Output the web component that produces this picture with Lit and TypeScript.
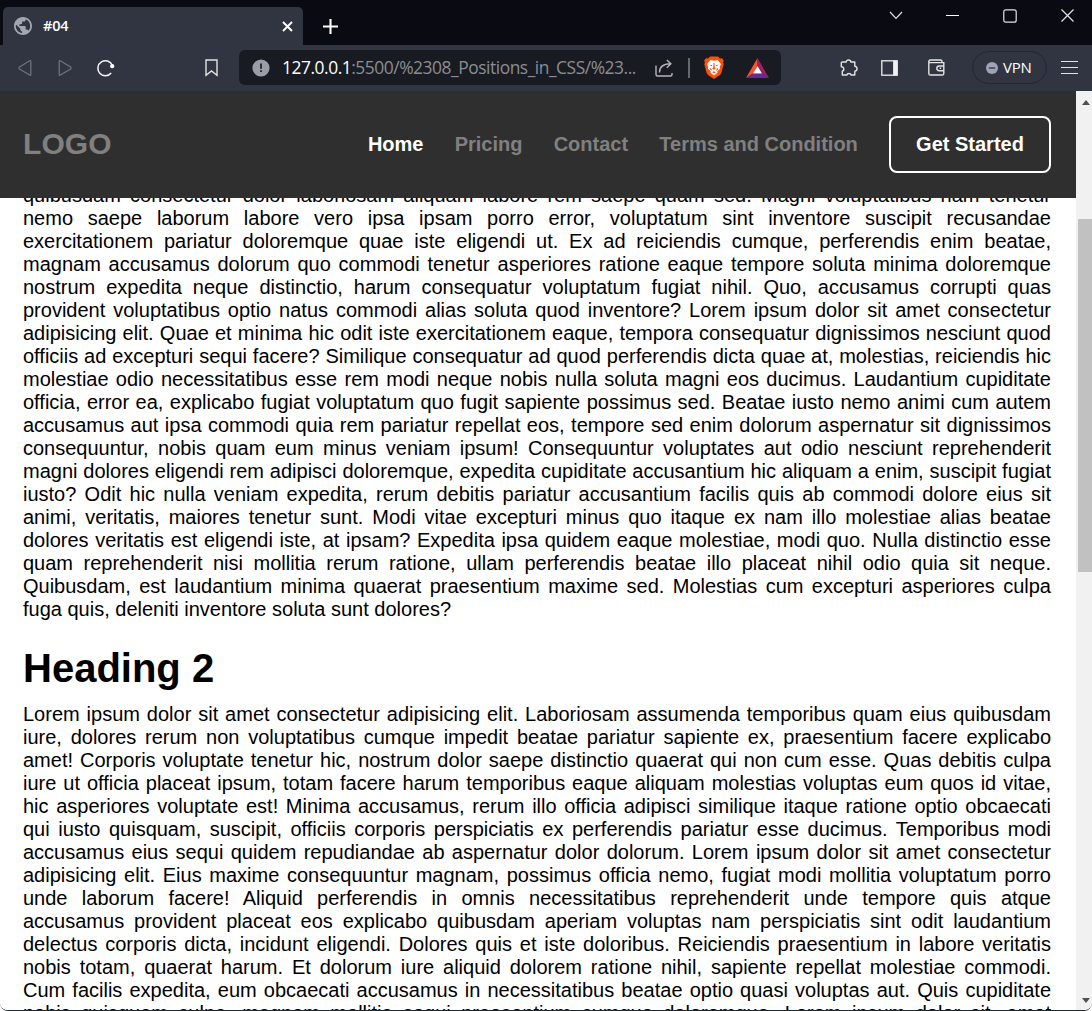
import { LitElement, html, css, svg } from "lit";
import { customElement } from "lit/decorators.js";

const FIRST = [
  "quibusdam consectetur dolor laboriosam aliquam labore rem saepe quam sed. Magni voluptatibus nam tenetur",
  "nemo saepe laborum labore vero ipsa ipsam porro error, voluptatum sint inventore suscipit recusandae",
  "exercitationem pariatur doloremque quae iste eligendi ut. Ex ad reiciendis cumque, perferendis enim beatae,",
  "magnam accusamus dolorum quo commodi tenetur asperiores ratione eaque tempore soluta minima doloremque",
  "nostrum expedita neque distinctio, harum consequatur voluptatum fugiat nihil. Quo, accusamus corrupti quas",
  "provident voluptatibus optio natus commodi alias soluta quod inventore? Lorem ipsum dolor sit amet consectetur",
  "adipisicing elit. Quae et minima hic odit iste exercitationem eaque, tempora consequatur dignissimos nesciunt quod",
  "officiis ad excepturi sequi facere? Similique consequatur ad quod perferendis dicta quae at, molestias, reiciendis hic",
  "molestiae odio necessitatibus esse rem modi neque nobis nulla soluta magni eos ducimus. Laudantium cupiditate",
  "officia, error ea, explicabo fugiat voluptatum quo fugit sapiente possimus sed. Beatae iusto nemo animi cum autem",
  "accusamus aut ipsa commodi quia rem pariatur repellat eos, tempore sed enim dolorum aspernatur sit dignissimos",
  "consequuntur, nobis quam eum minus veniam ipsum! Consequuntur voluptates aut odio nesciunt reprehenderit",
  "magni dolores eligendi rem adipisci doloremque, expedita cupiditate accusantium hic aliquam a enim, suscipit fugiat",
  "iusto? Odit hic nulla veniam expedita, rerum debitis pariatur accusantium facilis quis ab commodi dolore eius sit",
  "animi, veritatis, maiores tenetur sunt. Modi vitae excepturi minus quo itaque ex nam illo molestiae alias beatae",
  "dolores veritatis est eligendi iste, at ipsam? Expedita ipsa quidem eaque molestiae, modi quo. Nulla distinctio esse",
  "quam reprehenderit nisi mollitia rerum ratione, ullam perferendis beatae illo placeat nihil odio quia sit neque.",
  "Quibusdam, est laudantium minima quaerat praesentium maxime sed. Molestias cum excepturi asperiores culpa",
];
const FIRST_END = "fuga quis, deleniti inventore soluta sunt dolores?";

const SECOND = [
  "Lorem ipsum dolor sit amet consectetur adipisicing elit. Laboriosam assumenda temporibus quam eius quibusdam",
  "iure, dolores rerum non voluptatibus cumque impedit beatae pariatur sapiente ex, praesentium facere explicabo",
  "amet! Corporis voluptate tenetur hic, nostrum dolor saepe distinctio quaerat qui non cum esse. Quas debitis culpa",
  "iure ut officia placeat ipsum, totam facere harum temporibus eaque aliquam molestias voluptas eum quos id vitae,",
  "hic asperiores voluptate est! Minima accusamus, rerum illo officia adipisci similique itaque ratione optio obcaecati",
  "qui iusto quisquam, suscipit, officiis corporis perspiciatis ex perferendis pariatur esse ducimus. Temporibus modi",
  "accusamus eius sequi quidem repudiandae ab aspernatur dolor dolorum. Lorem ipsum dolor sit amet consectetur",
  "adipisicing elit. Eius maxime consequuntur magnam, possimus officia nemo, fugiat modi mollitia voluptatum porro",
  "unde laborum facere! Aliquid perferendis in omnis necessitatibus reprehenderit unde tempore quis atque",
  "accusamus provident placeat eos explicabo quibusdam aperiam voluptas nam perspiciatis sint odit laudantium",
  "delectus corporis dicta, incidunt eligendi. Dolores quis et iste doloribus. Reiciendis praesentium in labore veritatis",
  "nobis totam, quaerat harum. Et dolorum iure aliquid dolorem ratione nihil, sapiente repellat molestiae commodi.",
  "Cum facilis expedita, eum obcaecati accusamus in necessitatibus beatae optio quasi voluptas aut. Quis cupiditate",
  "nobis quisquam culpa, magnam mollitia sequi praesentium cumque doloremque. Lorem ipsum dolor sit, amet",
];

const line = (t: string) => html`<span class="line">${t}</span>`;

const icon = (w: number, h: number, body: unknown) =>
  html`<svg class="icon" width=${w} height=${h} viewBox="0 0 ${w} ${h}" fill="none" stroke="#e3e3e3" stroke-width="1.4">${body}</svg>`;

const globe = icon(18, 18, svg`
  <path transform="translate(-1.8 -1.8) scale(.9)" d="M12 2C6.48 2 2 6.48 2 12s4.48 10 10 10 10-4.48 10-10S17.52 2 12 2zm-1 17.93c-3.95-.49-7-3.85-7-7.93 0-.62.08-1.21.21-1.79L9 15v1c0 1.1.9 2 2 2v1.93zm6.9-2.54c-.26-.81-1-1.39-1.9-1.39h-1v-3c0-.55-.45-1-1-1H8v-2h2c.55 0 1-.45 1-1V7h2c1.1 0 2-.9 2-2v-.41c2.93 1.19 5 4.06 5 7.41 0 2.08-.8 3.97-2.1 5.39z" fill="#a3a7b0" stroke="none"/>`);
const closeTab = icon(11, 11, svg`<path d="M1 1L10 10M10 1L1 10" stroke="#fff" stroke-width="1.9"/>`);
const plus = icon(15, 15, svg`<path d="M7.5 0V15M0 7.5H15" stroke="#fff" stroke-width="2.1"/>`);
const back = icon(14, 18, svg`<path d="M11.7 1.8Q12.8 1.2 12.8 2.6V15.4Q12.8 16.8 11.6 16L1.5 10Q.3 9 1.5 8Z" stroke="#70737e" stroke-width="1.3"/>`);
const forward = icon(14, 18, svg`<path d="M2.3 1.8Q1.2 1.2 1.2 2.6V15.4Q1.2 16.8 2.4 16L12.5 10Q13.7 9 12.5 8Z" stroke="#70737e" stroke-width="1.3"/>`);
const reload = icon(18, 18, svg`<path d="M14.2 14A7.5 7.5 0 1 1 15.3 6.3" stroke="#f4f4f4" stroke-width="1.5"/><circle cx="15.2" cy="7.2" r="2.1" fill="#fff" stroke="none"/>`);
const bookmark = icon(13, 18, svg`<path d="M1 1H12V16.4L6.5 12L1 16.4Z"/>`);
const info = icon(18, 18, svg`<circle cx="9" cy="9" r="8.6" fill="#9b9da6" stroke="none"/><path d="M9 4.4V9.7M9 11.3V13" stroke="#181b22" stroke-width="1.7"/>`);
const share = icon(18, 18, svg`<path d="M1 6.5V15.5Q1 17 2.5 17H15.5Q17 17 17 15.5V14M4.5 13.5C4.4 7.5 8 5 15.5 4.8M11.8 1L15.9 4.8L11.8 8.7" stroke="#b4b5b9"/>`);
const brave = icon(20, 23, svg`
  <path d="M6 .5H14L16 2.6L18 2.3L19.8 4.6L19.1 6.5L19.7 8.2L17.5 16.4Q17 18.3 15.3 19.5L10 23L4.7 19.5Q3 18.3 2.5 16.4L.3 8.2L.9 6.5L.2 4.6L2 2.3L4 2.6Z" fill="#fb4f0b" stroke="none"/>
  <path d="M6.5 4L10 4.7L13.5 4L17 8L15.7 11.1L16.2 12.7L13.2 15.3L13.5 16.8L10 19.6L6.5 16.8L6.8 15.3L3.8 12.7L4.3 11.1L3 8Z" fill="#fff" stroke="none"/>
  <path d="M5.2 8.4L8.3 9.2L7.6 10.3ZM14.8 8.4L11.7 9.2L12.4 10.3ZM9.5 7H10.5L10.7 11.5L11.7 12.8L10 13.7L8.3 12.8L9.3 11.5ZM5.4 12.6L6.9 12.3L8 14.3L7 14.6ZM14.6 12.6L13.1 12.3L12 14.3L13 14.6ZM8.2 16.2L10 15.3L11.8 16.2L10 17.3Z" fill="#fb4f0b" stroke="none"/>`);
const rewards = icon(23, 20, svg`
  <path d="M11.5 0L0 20L7 15.4L11.5 8Z" fill="#ff5227" stroke="none"/>
  <path d="M11.5 0L23 20L16 15.4L11.5 8Z" fill="#9e1f63" stroke="none"/>
  <path d="M0 20L7 15.4H16L23 20Z" fill="#662d91" stroke="none"/>
  <path d="M11.5 8L16 15.4H7Z" fill="#fff" stroke="none"/>`);
const chevron = icon(14, 9, svg`<path d="M1 1L7 7.3L13 1" stroke-width="1.2"/>`);
const minimise = icon(13, 13, svg`<path d="M0 6.5H13" stroke="#fff" stroke-width="1"/>`);
const maximise = icon(14, 14, svg`<rect x=".8" y=".8" width="12.4" height="12.4" rx="2" stroke-width="1.2"/>`);
const closeWindow = icon(13, 13, svg`<path d="M.5 .5L12.5 12.5M12.5 .5L.5 12.5" stroke-width="1.2"/>`);
const puzzle = icon(18, 18, svg`<path d="M2.3 3H6.2C6.2 .3 10.8 .3 10.8 3H14.8V7.2C17.8 7.6 17.8 12 14.8 12.2V16H11.2C10.7 13.9 7.2 13.9 6.8 16H2.3V12.1C4.4 11.7 4.4 7.7 1.3 7.7V4Q1.3 3 2.3 3Z" stroke-linejoin="round"/>`);
const sidebar = icon(17, 16, svg`<rect x=".8" y=".8" width="15.4" height="14.4"/><path d="M12.5 1H16V15H12.5Z" fill="#f1f1f1" stroke="#f1f1f1" stroke-width=".8"/>`);
const wallet = icon(17, 17, svg`<path d="M15.8 5.2V3.6H2.2Q.8 3.6 .8 2.5Q.8 1 2.3 1H12.5Q14 1 14 2.4V3.4M.8 2.5V14.4Q.8 16 2.4 16H14.2Q15.8 16 15.8 14.4V4.4M15.8 7H11.2Q8.8 7 8.8 9.3Q8.8 11.7 11.2 11.7H15.8M11.6 9.3H13.2"/>`);
const vpnDot = icon(12, 12, svg`<circle cx="6" cy="6" r="6" fill="#a0a2b8" stroke="none"/><path d="M2.8 6H9.2" stroke="#313441" stroke-width="1.3"/>`);
const menu = icon(17, 15, svg`<path d="M0 1.5H17M0 7.5H17M0 13.5H17" stroke-width="1.1"/>`);

@customElement("browser-chrome")
export class BrowserChrome extends LitElement {
  static styles = css`
    :host { display: block; height: 91px; background: #313441; font-family: "Open Sans", "Noto Sans", sans-serif; color: #fff; }
    .icon { display: block; flex: none; }
    .strip { height: 45px; box-sizing: border-box; background: #0a0a13; display: flex; }
    .tab { width: 300px; margin: 7px 0 0 3px; box-sizing: border-box; background: #313441; border-radius: 5px 5px 0 0; padding: 0 10px 0 11px; display: flex; align-items: center; }
    .title { flex: 1; margin: -1px 0 0 11px; font-size: 14.5px; font-weight: 600; letter-spacing: -0.2px; line-height: 20px; }
    .new { margin: 19px 0 0 20px; }
    .window { margin-left: auto; display: flex; align-items: center; height: 31px; padding-right: 18px; }
    .w-min { margin-left: 43px; }
    .w-max { margin-left: 44px; }
    .w-close { margin-left: 44px; }
    .bar { height: 46px; display: flex; align-items: center; box-sizing: border-box; padding: 0 14px 1px 18px; }
    .b-forward { margin-left: 26px; }
    .b-reload { margin-left: 25px; }
    .b-mark { margin-left: 90px; }
    .address { width: 542px; height: 35px; box-sizing: border-box; margin-left: 21px; border-radius: 6px; background: #181b22; display: flex; align-items: center; padding: 0 12px 0 13px; }
    .url { width: 360px; margin: -1px 0 0 12px; font-size: 17.4px; line-height: 24px; white-space: nowrap; color: #8b8d92; letter-spacing: -0.46px; }
    .host { color: #fff; }
    .a-share { margin-left: 15px; }
    .rule { width: 2px; height: 20px; margin: 0 14px 0 15px; background: #65676d; }
    .a-rewards { margin-left: 22px; }
    .t-puzzle { margin-left: 59px; }
    .t-side { margin-left: 23px; }
    .t-wallet { margin-left: 30px; }
    .vpn { box-sizing: border-box; width: 75px; height: 33px; margin: 0 14px 0 27px; border: 1px solid #242632; border-radius: 17px; display: flex; align-items: center; padding-left: 13px; font-size: 15px; gap: 5px; letter-spacing: -0.2px; }
    .vpn-text { margin-top: -2px; }
  `;
  render() {
    return html`
      <div class="strip">
        <div class="tab">${globe}<span class="title">#04</span>${closeTab}</div>
        <div class="new">${plus}</div>
        <div class="window">
          ${chevron}<span class="w-min">${minimise}</span><span class="w-max">${maximise}</span><span class="w-close">${closeWindow}</span>
        </div>
      </div>
      <div class="bar">
        ${back}<span class="b-forward">${forward}</span><span class="b-reload">${reload}</span><span class="b-mark">${bookmark}</span>
        <div class="address">
          ${info}
          <span class="url"><span class="host">127.0.0.1</span>:5500/%2308_Positions_in_CSS/%23...</span>
          <span class="a-share">${share}</span><span class="rule"></span>${brave}<span class="a-rewards">${rewards}</span>
        </div>
        <span class="t-puzzle">${puzzle}</span><span class="t-side">${sidebar}</span><span class="t-wallet">${wallet}</span>
        <div class="vpn">${vpnDot}<span class="vpn-text">VPN</span></div>
        ${menu}
      </div>`;
  }
}

@customElement("site-header")
export class SiteHeader extends LitElement {
  static styles = css`
    :host { display: flex; align-items: center; justify-content: space-between; box-sizing: border-box; height: 107px; padding: 0 25px 0 23px; background: #2f2f2f; color: #808080; font-weight: bold; }
    .logo { font-size: 30px; line-height: 34px; margin-top: -2px; letter-spacing: 0.1px; }
    .nav { display: flex; align-items: center; gap: 31.2px; font-size: 20px; line-height: 23px; }
    .active { color: #fff; }
    .cta { box-sizing: border-box; width: 162px; height: 57px; border: 2px solid #fff; border-radius: 8px; color: #fff; display: flex; align-items: center; justify-content: center; }
  `;
  render() {
    return html`
      <span class="logo">LOGO</span>
      <nav class="nav">
        <span class="active">Home</span><span>Pricing</span><span>Contact</span><span>Terms and Condition</span>
        <span class="cta">Get Started</span>
      </nav>`;
  }
}

@customElement("app-root")
export class AppRoot extends LitElement {
  static styles = css`
    :host { display: flex; flex-direction: column; height: 1011px; overflow: hidden; background: #fff; font-family: "Liberation Sans", Arial, sans-serif; }
    .view { flex: 1; min-height: 0; display: flex; border-bottom: 1px solid #20292c; border-radius: 0 0 8px 8px; overflow: hidden; }
    .page { width: 1076px; height: 919px; overflow: hidden; background: #fff; color: #000; }
    .top { position: relative; z-index: 1; }
    .content { margin-top: -14px; padding: 0 25px 0 23px; font-size: 20px; line-height: 23px; }
    .text { margin: 0; }
    .line { display: block; height: 23px; white-space: nowrap; text-align: justify; text-align-last: justify; }
    .end { display: block; height: 23px; }
    .heading { margin: 24px 0 12px; font-size: 40px; line-height: 46px; font-weight: bold; }
    .scroll { width: 16px; box-sizing: border-box; padding: 9px 0 7px 2px; background: #f1f1f1; display: flex; flex-direction: column; align-items: center; }
    .thumb { width: 14px; height: 353px; margin-top: 114px; background: #c1c1c1; }
    .arrow { display: block; margin-left: 1px; }
    .down { margin-top: auto; }
  `;
  render() {
    return html`
      <browser-chrome></browser-chrome>
      <div class="view">
        <main class="page">
          <site-header class="top"></site-header>
          <article class="content">
            <p class="text">${FIRST.map(line)}<span class="end">${FIRST_END}</span></p>
            <h2 class="heading">Heading 2</h2>
            <p class="text">${SECOND.map(line)}</p>
          </article>
        </main>
        <div class="scroll">
          <svg class="arrow" width="8" height="5" viewBox="0 0 8 5"><path d="M0 5L4 0L8 5Z" fill="#505050"/></svg>
          <div class="thumb"></div>
          <svg class="arrow down" width="8" height="5" viewBox="0 0 8 5"><path d="M0 0L4 5L8 0Z" fill="#505050"/></svg>
        </div>
      </div>`;
  }
}
